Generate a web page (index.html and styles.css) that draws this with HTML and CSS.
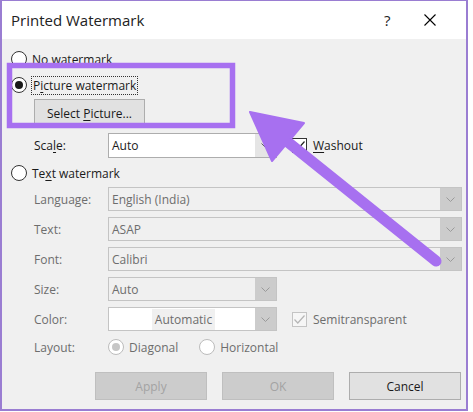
FILE: index.html
```html
<!DOCTYPE html>
<html lang="en">
<head>
    <meta charset="UTF-8">
    <title>Printed Watermark</title>
    <link rel="stylesheet" href="styles.css">
</head>
<body>

    <div class="dialog">
        <div class="titlebar">
            <span class="title">Printed Watermark</span>
            <span class="help">?</span>
            <span class="close">
                <svg width="12" height="12" viewBox="0 0 12 12"><path d="M0.5 0.5 L11.5 11.5 M11.5 0.5 L0.5 11.5" stroke="#000" stroke-width="1.1" fill="none"/></svg>
            </span>
        </div>

        <div class="content">
            <div class="radio-row first">
                <span class="radio"></span>
                <span><u>N</u>o watermark</span>
            </div>
            <div class="radio-row pic">
                <span class="radio checked"></span>
                <span class="focus">P<u>i</u>cture watermark</span>
            </div>
            <button class="btn select-btn">Select <u>P</u>icture...</button>

            <div class="field scale-row">
                <span class="label">Sca<u>l</u>e:</span>
                <div class="combo short">
                    <span class="value">Auto</span>
                    <span class="arrow"><svg width="9" height="5" viewBox="0 0 9 5"><path d="M0.5 0.5 L4.5 4.5 L8.5 0.5" stroke="#606060" fill="none"/></svg></span>
                </div>
                <div class="check-wrap">
                    <span class="check"><svg width="11" height="9" viewBox="0 0 11 9"><path d="M0.5 4.5 L3.8 8 L10.5 0.5" stroke="#222" stroke-width="1.2" fill="none"/></svg></span>
                    <span><u>W</u>ashout</span>
                </div>
            </div>

            <div class="radio-row text-wm">
                <span class="radio"></span>
                <span>Te<u>x</u>t watermark</span>
            </div>

            <div class="field off">
                <span class="label">Language:</span>
                <div class="combo">
                    <span class="value">English (India)</span>
                    <span class="arrow"><svg width="9" height="5" viewBox="0 0 9 5"><path d="M0.5 0.5 L4.5 4.5 L8.5 0.5" stroke="#9a9a9a" fill="none"/></svg></span>
                </div>
            </div>
            <div class="field off">
                <span class="label">Text:</span>
                <div class="combo">
                    <span class="value">ASAP</span>
                    <span class="arrow"><svg width="9" height="5" viewBox="0 0 9 5"><path d="M0.5 0.5 L4.5 4.5 L8.5 0.5" stroke="#9a9a9a" fill="none"/></svg></span>
                </div>
            </div>
            <div class="field off">
                <span class="label">Font:</span>
                <div class="combo">
                    <span class="value">Calibri</span>
                    <span class="arrow"><svg width="9" height="5" viewBox="0 0 9 5"><path d="M0.5 0.5 L4.5 4.5 L8.5 0.5" stroke="#9a9a9a" fill="none"/></svg></span>
                </div>
            </div>
            <div class="field off">
                <span class="label">Size:</span>
                <div class="combo short">
                    <span class="value">Auto</span>
                    <span class="arrow"><svg width="9" height="5" viewBox="0 0 9 5"><path d="M0.5 0.5 L4.5 4.5 L8.5 0.5" stroke="#9a9a9a" fill="none"/></svg></span>
                </div>
            </div>
            <div class="field off">
                <span class="label">Color:</span>
                <div class="combo short white">
                    <span class="value center"><span class="swatch">Automatic</span></span>
                    <span class="arrow"><svg width="9" height="5" viewBox="0 0 9 5"><path d="M0.5 0.5 L4.5 4.5 L8.5 0.5" stroke="#9a9a9a" fill="none"/></svg></span>
                </div>
                <div class="check-wrap">
                    <span class="check dim"><svg width="11" height="9" viewBox="0 0 11 9"><path d="M0.5 4.5 L3.8 8 L10.5 0.5" stroke="#b5b5b5" stroke-width="1.2" fill="none"/></svg></span>
                    <span>Semitransparent</span>
                </div>
            </div>
            <div class="field off layout-row">
                <span class="label">Layout:</span>
                <div class="opt">
                    <span class="radio dim checked"></span>
                    <span>Diagonal</span>
                </div>
                <div class="opt">
                    <span class="radio dim"></span>
                    <span>Horizontal</span>
                </div>
            </div>

            <div class="actions">
                <button class="btn wide" disabled>Apply</button>
                <button class="btn wide" disabled>OK</button>
                <button class="btn wide">Cancel</button>
            </div>
        </div>

        <!-- highlight box and arrow drawn over the dialog -->
        <svg class="marks" width="473" height="412" viewBox="0 0 473 412">
            <rect x="9.5" y="65.5" width="223" height="60" fill="none" stroke="#a770f0" stroke-width="5.5"/>
            <line x1="436" y1="261" x2="284" y2="139" stroke="#a770f0" stroke-width="11" stroke-linecap="round"/>
            <polygon points="250,112 304,123 272,161" fill="#a770f0" stroke="#a770f0" stroke-width="2" stroke-linejoin="round"/>
        </svg>
    </div>

</body>
</html>
```

FILE: styles.css
```css
body {
    margin: 0;
    background: #fff;
    font-family: "Open Sans", "Noto Sans", Arial, sans-serif;
    font-size: 12px;
    color: #1a1a1a;
}
.dialog {
    position: relative;
    width: 464px;
    height: 408px;
    border: 2px solid #9a7dd2;
    border-top-width: 1px;
    background: #f0f0f0;
}
.titlebar {
    height: 38px;
    background: #fff;
    display: flex;
    align-items: center;
    padding-left: 9px;
}
.title {
    font-size: 15px;
    flex: 1;
    color: #222;
}
.help {
    font-size: 15px;
    width: 40px;
    color: #222;
}
.close {
    width: 28px;
    margin-right: 14px;
    display: flex;
}
.content {
    padding-left: 9px;
}
u {
    text-decoration-thickness: 1px;
    text-underline-offset: 2px;
}

.radio-row {
    display: flex;
    align-items: center;
    height: 16px;
    gap: 5px;
}
.radio-row.first { margin-top: 12px; }
.radio-row.pic { margin-top: 10px; }
.radio-row.text-wm { margin-top: 7px; }
.radio {
    box-sizing: border-box;
    width: 16px;
    height: 16px;
    border: 1px solid #333;
    border-radius: 50%;
    background: #fff;
    display: flex;
    align-items: center;
    justify-content: center;
}
.radio.checked::after {
    content: "";
    width: 8px;
    height: 8px;
    border-radius: 50%;
    background: #1a1a1a;
}
.radio.dim {
    border-color: #bcbcbc;
}
.radio.dim.checked::after {
    background: #c6c6c6;
}
.focus {
    outline: 1px dotted #333;
    outline-offset: 0;
    padding: 0 1px;
}

.btn {
    font-family: inherit;
    font-size: 12px;
    color: #1a1a1a;
    background: #e1e1e1;
    border: 1px solid #adadad;
    padding: 0;
}
.btn:disabled {
    background: #cccccc;
    border-color: #bfbfbf;
    color: #a3a3a3;
}
.select-btn {
    display: block;
    margin: 6px 0 0 23px;
    width: 111px;
    height: 28px;
}

.field {
    display: flex;
    align-items: center;
    margin-top: 6px;
    height: 24px;
}
.field .label {
    width: 74px;
    padding-left: 23px;
    flex-shrink: 0;
}
.field.off .label,
.field.off .value,
.field.off .check-wrap,
.field.off .opt {
    color: #6d6d6d;
}
.scale-row {
    height: 25px;
}
.combo {
    box-sizing: border-box;
    display: flex;
    width: 354px;
    height: 100%;
    border: 1px solid #c4c4c4;
    background: #f0f0f0;
}
.scale-row .combo {
    background: #fff;
    border-color: #adadad;
}
.combo.short {
    width: 169px;
}
.combo.white {
    background: #fff;
}
.combo .value {
    flex: 1;
    display: flex;
    align-items: center;
    padding-left: 3px;
}
.combo .value.center {
    justify-content: center;
}
.swatch {
    background: #f0f0f0;
    padding: 2px 3px;
}
.combo .arrow {
    width: 21px;
    background: #cccccc;
    display: flex;
    align-items: center;
    justify-content: center;
}
.scale-row .combo .arrow {
    background: #e5e5e5;
}
.check-wrap {
    display: flex;
    align-items: center;
    gap: 6px;
    margin-left: 15px;
}
.check {
    box-sizing: border-box;
    width: 15px;
    height: 15px;
    border: 1px solid #333;
    background: #fff;
    display: flex;
    align-items: center;
    justify-content: center;
}
.check.dim {
    border-color: #c4c4c4;
    background: #f6f6f6;
}
.layout-row {
    margin-top: 8px;
    height: 16px;
}
.opt {
    display: flex;
    align-items: center;
    gap: 5px;
    margin-right: 21px;
}

.actions {
    display: flex;
    justify-content: flex-end;
    gap: 15px;
    margin-top: 17px;
    padding-right: 5px;
}
.btn.wide {
    width: 112px;
    height: 28px;
}

.marks {
    position: absolute;
    left: -2px;
    top: -1px;
    pointer-events: none;
}
```
